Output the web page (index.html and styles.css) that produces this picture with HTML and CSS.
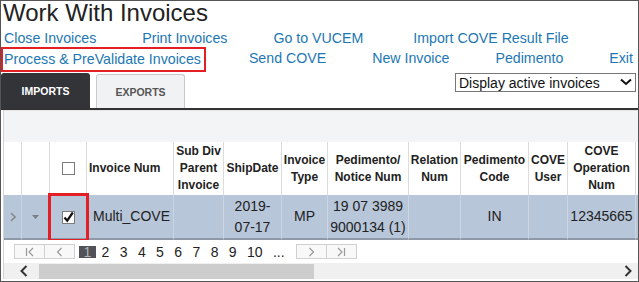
FILE: index.html
```html
<!DOCTYPE html>
<html lang="en">
<head>
    <meta charset="UTF-8">
    <meta name="viewport" content="width=device-width, initial-scale=1.0">
    <title>Work With Invoices</title>
    <link rel="stylesheet" href="styles.css">
</head>
<body>
    <div class="frame">
        <h1 class="title">Work With Invoices</h1>

        <nav class="links">
            <div class="link-row">
                <a href="#">Close Invoices</a>
                <a href="#">Print Invoices</a>
                <a href="#">Go to VUCEM</a>
                <a href="#" class="wide">Import COVE Result File</a>
            </div>
            <div class="link-row">
                <a href="#" class="marked">Process &amp; PreValidate Invoices</a>
                <a href="#">Send COVE</a>
                <a href="#">New Invoice</a>
                <a href="#">Pedimento</a>
                <a href="#">Exit</a>
            </div>
        </nav>

        <div class="tabbar">
            <div class="tabs">
                <div class="tab active">IMPORTS</div>
                <div class="tab">EXPORTS</div>
            </div>
            <div class="filter">
                <select class="filter-select">
                    <option>Display active invoices</option>
                    <option>Display all invoices</option>
                </select>
                <svg class="filter-arrow" width="12" height="8" viewBox="0 0 12 8">
                    <polyline points="1,1.5 6,6 11,1.5" fill="none" stroke="#111" stroke-width="2"/>
                </svg>
            </div>
        </div>

        <div class="grid-panel">
            <div class="grid-toolbar"></div>
            <div class="grid-scroll">
                <table class="grid">
                    <colgroup>
                        <col style="width:18px">
                        <col style="width:28px">
                        <col style="width:37px">
                        <col style="width:87px">
                        <col style="width:50px">
                        <col style="width:58px">
                        <col style="width:46px">
                        <col style="width:81px">
                        <col style="width:52px">
                        <col style="width:68px">
                        <col style="width:39px">
                        <col style="width:68px">
                        <col style="width:100px">
                    </colgroup>
                    <thead>
                        <tr>
                            <th></th>
                            <th></th>
                            <th><span class="cb"></span></th>
                            <th class="left">Invoice Num</th>
                            <th>Sub Div Parent Invoice</th>
                            <th>ShipDate</th>
                            <th>Invoice Type</th>
                            <th>Pedimento/ Notice Num</th>
                            <th>Relation Num</th>
                            <th>Pedimento Code</th>
                            <th>COVE User</th>
                            <th>COVE Operation Num</th>
                            <th></th>
                        </tr>
                    </thead>
                    <tbody>
                        <tr>
                            <td>
                                <svg width="6" height="10" viewBox="0 0 6 10"><polyline points="1,1 5,5 1,9" fill="none" stroke="#8a8a8a" stroke-width="1.6"/></svg>
                            </td>
                            <td>
                                <svg width="7" height="4" viewBox="0 0 7 4"><polygon points="0,0 7,0 3.5,4" fill="#7d7d7d"/></svg>
                            </td>
                            <td class="marked-cell">
                                <span class="cb">
                                    <svg width="13" height="13" viewBox="0 0 13 13"><polyline points="2.5,6.5 5.2,9.6 10.8,1.5" fill="none" stroke="#111" stroke-width="2.2"/></svg>
                                </span>
                            </td>
                            <td class="left">Multi_COVE</td>
                            <td></td>
                            <td>2019-<br>07-17</td>
                            <td>MP</td>
                            <td>19 07 3989<br>9000134 (1)</td>
                            <td></td>
                            <td>IN</td>
                            <td></td>
                            <td>12345665</td>
                            <td></td>
                        </tr>
                    </tbody>
                </table>
            </div>

            <div class="pager">
                <div class="pg-group">
                    <span class="pg-btn">
                        <svg width="10" height="10" viewBox="0 0 10 10"><line x1="1.5" y1="1" x2="1.5" y2="9" stroke="#999" stroke-width="1.2"/><polyline points="8,1 4,5 8,9" fill="none" stroke="#999" stroke-width="1.2"/></svg>
                    </span>
                    <span class="pg-btn">
                        <svg width="10" height="10" viewBox="0 0 10 10"><polyline points="6.5,1 2.5,5 6.5,9" fill="none" stroke="#999" stroke-width="1.2"/></svg>
                    </span>
                </div>
                <span class="pg-current">1</span>
                <span class="pg-num first">2</span>
                <span class="pg-num">3</span>
                <span class="pg-num">4</span>
                <span class="pg-num">5</span>
                <span class="pg-num">6</span>
                <span class="pg-num">7</span>
                <span class="pg-num">8</span>
                <span class="pg-num">9</span>
                <span class="pg-num">10</span>
                <span class="pg-num">...</span>
                <div class="pg-group next">
                    <span class="pg-btn">
                        <svg width="10" height="10" viewBox="0 0 10 10"><polyline points="3.5,1 7.5,5 3.5,9" fill="none" stroke="#999" stroke-width="1.2"/></svg>
                    </span>
                    <span class="pg-btn">
                        <svg width="10" height="10" viewBox="0 0 10 10"><polyline points="2,1 6,5 2,9" fill="none" stroke="#999" stroke-width="1.2"/><line x1="8.5" y1="1" x2="8.5" y2="9" stroke="#999" stroke-width="1.2"/></svg>
                    </span>
                </div>
            </div>

            <div class="hscroll">
                <svg class="hs-arrow" width="8" height="12" viewBox="0 0 8 12"><polyline points="6.5,1 1.5,6 6.5,11" fill="none" stroke="#333" stroke-width="2"/></svg>
                <div class="hs-thumb"></div>
                <svg class="hs-arrow right" width="8" height="12" viewBox="0 0 8 12"><polyline points="1.5,1 6.5,6 1.5,11" fill="none" stroke="#333" stroke-width="2"/></svg>
            </div>
        </div>
    </div>
</body>
</html>
```

FILE: styles.css
```css
body {
    margin: 0;
    padding: 0;
    background-color: #fff;
    font-family: 'Liberation Sans', Arial, sans-serif;
    color: #222;
}
.frame {
    width: 639px;
    height: 282px;
    box-sizing: border-box;
    border: 1px solid #555;
    overflow: hidden;
}
.title {
    margin: 0;
    padding-left: 2px;
    font-size: 24px;
    font-weight: normal;
    line-height: 24px;
    color: #222;
}
/* action links */
.links {
    margin-top: 3px;
}
.link-row {
    display: flex;
    align-items: flex-start;
    gap: 46px;
    padding-left: 3px;
    height: 20px;
}
.link-row a {
    flex-shrink: 0;
    font-size: 14.2px;
    line-height: 20px;
    color: #1d77b3;
    text-decoration: none;
    white-space: nowrap;
}
.link-row a.wide {
    margin-left: 4px;
}
.link-row a.marked {
    border: 2px solid #e31e24;
    padding: 0 3px 1px 1px;
    margin: -1px -3px -4px -3px;
}
/* tabs + filter */
.tabbar {
    display: flex;
    justify-content: space-between;
    align-items: flex-start;
    margin-top: 5px;
    border-bottom: 2px solid #333;
}
.tabs {
    display: flex;
    align-items: flex-start;
}
.tab {
    width: 89px;
    height: 34px;
    box-sizing: border-box;
    display: flex;
    align-items: center;
    justify-content: center;
    font-size: 10.5px;
    font-weight: bold;
    color: #555;
    background-color: #f1f2f4;
    border: 1px solid #c9c9c9;
    border-bottom: none;
    border-radius: 3px 3px 0 0;
    margin-left: 6px;
    margin-top: 1px;
}
.tab.active {
    background-color: #333438;
    color: #fff;
    border: none;
    margin: 0;
    height: 35px;
}
.filter {
    position: relative;
    width: 181px;
    height: 19px;
    margin-right: 2px;
}
.filter-select {
    -webkit-appearance: none;
    appearance: none;
    width: 100%;
    height: 100%;
    box-sizing: border-box;
    border: 1px solid #777;
    border-radius: 0;
    background-color: #fff;
    padding: 0 0 0 3px;
    font-family: 'Liberation Sans', Arial, sans-serif;
    font-size: 14px;
    color: #111;
}
.filter-arrow {
    position: absolute;
    right: 4px;
    top: 5px;
    pointer-events: none;
}
/* grid */
.grid-panel {
    margin-left: 2px;
    border-left: 1px solid #d4d4d4;
}
.grid-toolbar {
    height: 32px;
    box-sizing: border-box;
    background-color: #f3f4f6;
    border-top: 1px solid #e4e4e4;
}
.grid-scroll {
    overflow: hidden;
}
.grid {
    table-layout: fixed;
    border-collapse: separate;
    border-spacing: 0;
    width: 732px;
}
.grid th {
    height: 53px;
    padding: 0 1px;
    background-color: #fff;
    border-right: 1px solid #dcdcdc;
    font-size: 12px;
    font-weight: bold;
    line-height: 17px;
    color: #222;
    text-align: center;
    vertical-align: middle;
    overflow: hidden;
}
.grid th.left {
    text-align: left;
    padding-left: 2px;
}
.grid td {
    height: 43px;
    padding: 0 1px;
    background-color: #b7c6d9;
    border-right: 1px solid #cbd4e0;
    border-bottom: 2px solid #8e99a7;
    font-size: 14px;
    line-height: 21px;
    color: #222;
    text-align: center;
    vertical-align: middle;
    white-space: nowrap;
    overflow: hidden;
}
.grid td.left {
    text-align: left;
    padding-left: 6px;
}
.grid td svg {
    vertical-align: middle;
}
.grid td.marked-cell {
    outline: 3px solid #e31e24;
    outline-offset: -1px;
}
.cb {
    display: inline-block;
    width: 13px;
    height: 13px;
    box-sizing: border-box;
    border: 1px solid #7b7b7b;
    background-color: #fff;
    vertical-align: middle;
    position: relative;
}
.cb svg {
    position: absolute;
    left: -1px;
    top: -1px;
}
/* pager */
.pager {
    display: flex;
    align-items: center;
    height: 23px;
    padding-left: 10px;
    background-color: #fff;
    font-size: 14px;
    color: #222;
}
.pg-group {
    display: flex;
}
.pg-group.next {
    margin-left: 11px;
}
.pg-btn {
    width: 31px;
    height: 15px;
    box-sizing: border-box;
    border: 1px solid #d0d0d0;
    background-color: #f8f8f8;
    display: flex;
    align-items: center;
    justify-content: center;
}
.pg-btn + .pg-btn {
    margin-left: -1px;
}
.pg-current {
    width: 17px;
    height: 12px;
    margin-left: 4px;
    background-color: #505257;
    color: #b5b5b5;
    line-height: 12px;
    text-align: center;
}
.pg-num {
    margin-left: 10.4px;
    line-height: 16px;
}
.pg-num.first {
    margin-left: 5.5px;
}
/* horizontal scrollbar */
.hscroll {
    display: flex;
    align-items: center;
    height: 16px;
    background-color: #f0f0f0;
}
.hs-arrow {
    margin-left: 16px;
}
.hs-arrow.right {
    margin-left: auto;
    margin-right: 6px;
}
.hs-thumb {
    width: 275px;
    height: 15px;
    margin-left: 11px;
    background-color: #cdcdcd;
}
```
